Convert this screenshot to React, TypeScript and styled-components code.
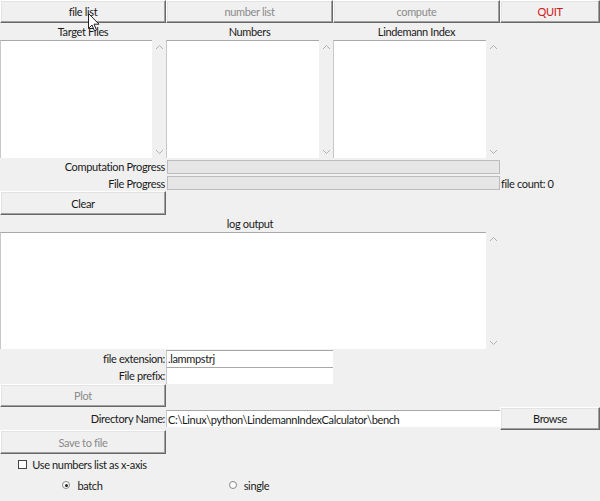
import styled, { createGlobalStyle } from 'styled-components';

const GlobalStyle = createGlobalStyle`
  html, body {
    margin: 0;
    padding: 0;
    background: #f0f0f0;
  }
  #root {
    width: 600px;
    height: 501px;
  }
  * {
    box-sizing: border-box;
  }
`;

const Window = styled.div`
  position: relative;
  width: 600px;
  height: 501px;
  background: #f0f0f0;
  font-family: Lato, 'Noto Sans', sans-serif;
  font-size: 11px;
  letter-spacing: -0.35px;
  color: #1a1a1a;
  display: grid;
  grid-template-columns: 166px 167px 167px 100px;
  grid-template-rows: 23px 17px 118px 17px 16px 24px 17px 117px 18px 17px 23px 23px 24px 20px 22px;
`;

const Cell = styled.div<{ $col: string; $row: number; $align?: 'start' | 'center' | 'end' }>`
  grid-column: ${({ $col }) => $col};
  grid-row: ${({ $row }) => $row};
  display: flex;
  align-items: center;
  justify-content: ${({ $align }) =>
    $align === 'end' ? 'flex-end' : $align === 'start' ? 'flex-start' : 'center'};
  min-width: 0;
`;

const Button = styled.button<{ $tone?: 'normal' | 'disabled' | 'quit' }>`
  width: 100%;
  height: 100%;
  margin: 0;
  padding: 0;
  font: inherit;
  letter-spacing: inherit;
  background: #f0f0f0;
  border: 1px solid;
  border-color: #ffffff #696969 #696969 #ffffff;
  box-shadow: inset -1px -1px 0 #a0a0a0, inset 1px 1px 0 #e3e3e3;
  color: ${({ $tone }) =>
    $tone === 'disabled' ? '#8a8a8a' : $tone === 'quit' ? '#d01818' : '#1a1a1a'};
`;

const Label = styled.span`
  white-space: nowrap;
  padding: 0 1px;
`;

const ListPane = styled.div`
  display: flex;
  width: 100%;
  height: 100%;
`;

const WhiteBox = styled.div`
  flex: 1;
  background: #ffffff;
  border-top: 1px solid #a8a8a8;
  border-left: 1px solid #c8c8c8;
`;

const Scroll = styled.div`
  width: 14px;
  display: flex;
  flex-direction: column;
  justify-content: space-between;
  align-items: center;
  padding: 4px 0 3px;
  color: #b0b0b0;
`;

const Progress = styled.div`
  width: 100%;
  height: 14px;
  margin-left: 1px;
  background: #e6e6e6;
  border: 1px solid #bcbcbc;
`;

const Entry = styled.div<{ $h: number }>`
  width: 100%;
  height: ${({ $h }) => $h}px;
  background: #ffffff;
  border-top: 1px solid #a8a8a8;
  border-left: 1px solid #c8c8c8;
  display: flex;
  align-items: center;
  padding-left: 1px;
  white-space: nowrap;
  overflow: hidden;
`;

const Check = styled.span`
  width: 9px;
  height: 9px;
  border: 1px solid #444;
  background: #fff;
  margin-right: 4px;
`;

const Radio = styled.span<{ $on?: boolean }>`
  width: 8px;
  height: 8px;
  border-radius: 50%;
  border: 1px solid #888;
  background: #fff;
  margin-right: 6px;
  display: flex;
  align-items: center;
  justify-content: center;
  &::after {
    content: '';
    width: 3px;
    height: 3px;
    border-radius: 50%;
    background: ${({ $on }) => ($on ? '#222' : 'transparent')};
  }
`;

const Option = styled.div`
  display: flex;
  align-items: center;
`;

const Cursor = styled.svg`
  position: absolute;
  left: 88px;
  top: 13px;
  pointer-events: none;
`;

const Chevron = ({ up }: { up?: boolean }) => (
  <svg width="9" height="6" viewBox="0 0 9 6">
    <path
      d={up ? 'M1 5 L4.5 1.5 L8 5' : 'M1 1 L4.5 4.5 L8 1'}
      fill="none"
      stroke="currentColor"
      strokeWidth="1"
    />
  </svg>
);

const ScrollList = () => (
  <ListPane>
    <WhiteBox />
    <Scroll>
      <Chevron up />
      <Chevron />
    </Scroll>
  </ListPane>
);

export default function App() {
  return (
    <>
      <GlobalStyle />
      <Window>
        <Cell $col="1" $row={1}>
          <Button>file list</Button>
        </Cell>
        <Cell $col="2" $row={1}>
          <Button $tone="disabled">number list</Button>
        </Cell>
        <Cell $col="3" $row={1}>
          <Button $tone="disabled">compute</Button>
        </Cell>
        <Cell $col="4" $row={1}>
          <Button $tone="quit">QUIT</Button>
        </Cell>

        <Cell $col="1" $row={2}>
          <Label>Target Files</Label>
        </Cell>
        <Cell $col="2" $row={2}>
          <Label>Numbers</Label>
        </Cell>
        <Cell $col="3" $row={2}>
          <Label>Lindemann Index</Label>
        </Cell>

        <Cell $col="1" $row={3}>
          <ScrollList />
        </Cell>
        <Cell $col="2" $row={3}>
          <ScrollList />
        </Cell>
        <Cell $col="3" $row={3}>
          <ScrollList />
        </Cell>

        <Cell $col="1" $row={4} $align="end">
          <Label>Computation Progress</Label>
        </Cell>
        <Cell $col="2 / 4" $row={4}>
          <Progress />
        </Cell>

        <Cell $col="1" $row={5} $align="end">
          <Label>File Progress</Label>
        </Cell>
        <Cell $col="2 / 4" $row={5}>
          <Progress />
        </Cell>
        <Cell $col="4" $row={5} $align="start">
          <Label>file count: 0</Label>
        </Cell>

        <Cell $col="1" $row={6}>
          <Button>Clear</Button>
        </Cell>

        <Cell $col="1 / 4" $row={7}>
          <Label>log output</Label>
        </Cell>
        <Cell $col="1 / 4" $row={8}>
          <ScrollList />
        </Cell>

        <Cell $col="1" $row={9} $align="end">
          <Label>file extension:</Label>
        </Cell>
        <Cell $col="2" $row={9}>
          <Entry $h={17}>.lammpstrj</Entry>
        </Cell>

        <Cell $col="1" $row={10} $align="end">
          <Label>File prefix:</Label>
        </Cell>
        <Cell $col="2" $row={10}>
          <Entry $h={17} />
        </Cell>

        <Cell $col="1" $row={11}>
          <Button $tone="disabled">Plot</Button>
        </Cell>

        <Cell $col="1" $row={12} $align="end">
          <Label>Directory Name:</Label>
        </Cell>
        <Cell $col="2 / 4" $row={12}>
          <Entry $h={17}>C:\Linux\python\LindemannIndexCalculator\bench</Entry>
        </Cell>
        <Cell $col="4" $row={12}>
          <Button>Browse</Button>
        </Cell>

        <Cell $col="1" $row={13}>
          <Button $tone="disabled">Save to file</Button>
        </Cell>

        <Cell $col="1" $row={14}>
          <Option>
            <Check />
            <Label>Use numbers list as x-axis</Label>
          </Option>
        </Cell>

        <Cell $col="1" $row={15}>
          <Option>
            <Radio $on />
            <Label>batch</Label>
          </Option>
        </Cell>
        <Cell $col="2" $row={15}>
          <Option>
            <Radio />
            <Label>single</Label>
          </Option>
        </Cell>

        <Cursor width="12" height="19" viewBox="0 0 12 19">
          <path
            d="M0.5 0.5 L0.5 15.5 L4 12 L6.5 18 L8.5 17 L6 11.2 L11 11.2 Z"
            fill="#ffffff"
            stroke="#222222"
            strokeWidth="1"
            strokeLinejoin="round"
          />
        </Cursor>
      </Window>
    </>
  );
}
